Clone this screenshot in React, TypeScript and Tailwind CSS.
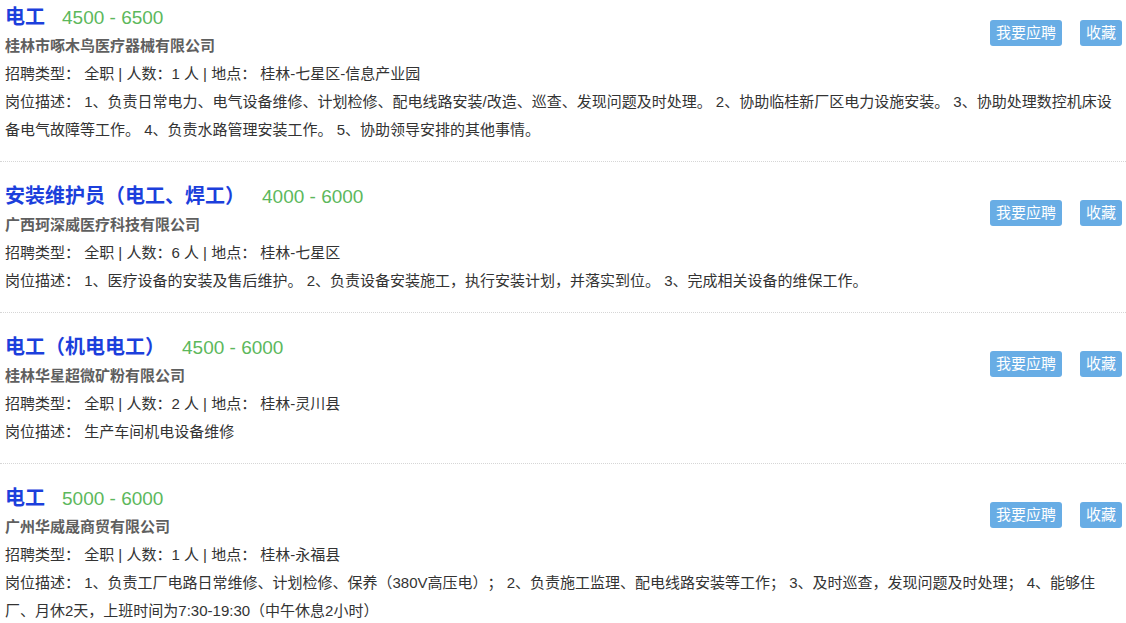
import React from "react";

type Job = {
  title: string;
  salary: string;
  company: string;
  count: string;
  place: string;
  desc: string;
};

const jobs: Job[] = [
  {
    title: "电工",
    salary: "4500 - 6500",
    company: "桂林市啄木鸟医疗器械有限公司",
    count: "1",
    place: "桂林-七星区-信息产业园",
    desc: "1、负责日常电力、电气设备维修、计划检修、配电线路安装/改造、巡查、发现问题及时处理。 2、协助临桂新厂区电力设施安装。 3、协助处理数控机床设备电气故障等工作。 4、负责水路管理安装工作。 5、协助领导安排的其他事情。",
  },
  {
    title: "安装维护员（电工、焊工）",
    salary: "4000 - 6000",
    company: "广西珂深威医疗科技有限公司",
    count: "6",
    place: "桂林-七星区",
    desc: "1、医疗设备的安装及售后维护。 2、负责设备安装施工，执行安装计划，并落实到位。 3、完成相关设备的维保工作。",
  },
  {
    title: "电工（机电电工）",
    salary: "4500 - 6000",
    company: "桂林华星超微矿粉有限公司",
    count: "2",
    place: "桂林-灵川县",
    desc: "生产车间机电设备维修",
  },
  {
    title: "电工",
    salary: "5000 - 6000",
    company: "广州华威晟商贸有限公司",
    count: "1",
    place: "桂林-永福县",
    desc: "1、负责工厂电路日常维修、计划检修、保养（380V高压电）； 2、负责施工监理、配电线路安装等工作； 3、及时巡查，发现问题及时处理； 4、能够住厂、月休2天，上班时间为7:30-19:30（中午休息2小时）",
  },
];

function JobItem({ job, first }: { job: Job; first: boolean }) {
  return (
    <div
      className={
        "relative pl-[5px] pr-[5px] pb-[17px] border-b border-dotted border-[#d6d6d6] " +
        (first ? "pt-[3px]" : "pt-[20px]")
      }
    >
      <div className="flex items-baseline leading-[28px]">
        <span className="text-[20px] font-bold text-[#1c3fdc]">{job.title}</span>
        <span className="ml-[17px] text-[19px] text-[#5cb85c]">{job.salary}</span>
      </div>
      <div className="text-[15px] leading-[28px] font-bold text-[#5f5f5f]">{job.company}</div>
      <div className="text-[15px] leading-[28px] text-[#333]">
        招聘类型： 全职 | 人数：{job.count} 人 | 地点： {job.place}
      </div>
      <div className="text-[15px] leading-[28px] text-[#333]">岗位描述： {job.desc}</div>
      <div
        className={
          "absolute right-[4px] flex gap-[18px] " + (first ? "top-[20px]" : "top-[38px]")
        }
      >
        <button className="h-[26px] px-[6px] rounded-[3px] bg-[#68ade5] text-white text-[15px] leading-[26px]">
          我要应聘
        </button>
        <button className="h-[26px] px-[6px] rounded-[3px] bg-[#68ade5] text-white text-[15px] leading-[26px]">
          收藏
        </button>
      </div>
    </div>
  );
}

export default function App() {
  return (
    <div
      className="w-[1126px] h-[623px] overflow-hidden bg-white [text-spacing-trim:space-all]"
      style={{ fontFamily: '"Liberation Sans", "Noto Sans CJK SC", sans-serif' }}
    >
      {jobs.map((j, i) => (
        <JobItem key={i} job={j} first={i === 0} />
      ))}
    </div>
  );
}
